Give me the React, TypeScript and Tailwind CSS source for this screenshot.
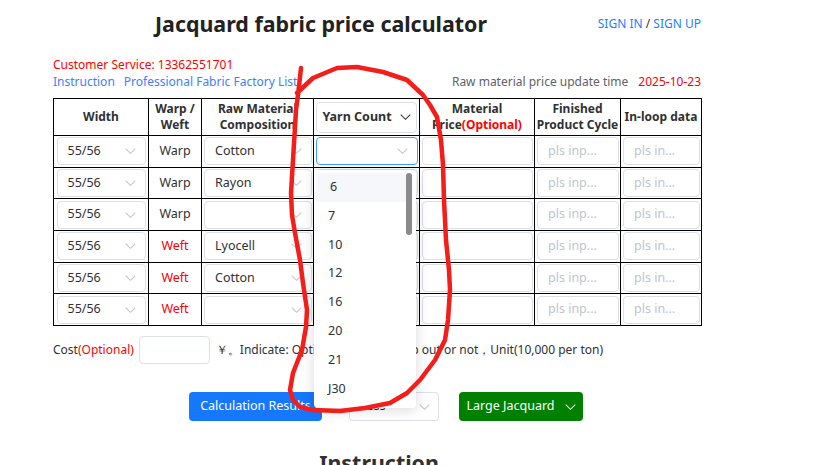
import React from "react";

const Chev = ({ color = "#c0c4cc", w = 11 }: { color?: string; w?: number }) => (
  <svg width={w} height={w * 0.55} viewBox="0 0 12 6.6" fill="none">
    <path d="M0.8 0.8 L6 5.8 L11.2 0.8" stroke={color} strokeWidth="1.1" />
  </svg>
);

const Sel = ({ text, w, focus }: { text?: string; w: string; focus?: boolean }) => (
  <div
    className={`${w} h-[28px] mx-auto flex items-center justify-between pl-[10px] pr-[9px] rounded-[4px] border bg-white ${
      focus ? "border-[#409eff]" : "border-[#dcdfe6]"
    }`}
  >
    <span className="text-[12.5px] text-[#303133]">{text}</span>
    <Chev />
  </div>
);

const Inp = ({ w, ph }: { w: string; ph?: string }) => (
  <div className={`${w} h-[28px] mx-auto flex items-center pl-[10px] rounded-[4px] border border-[#dcdfe6] bg-white`}>
    <span className="text-[12.5px] text-[#c0c4cc]">{ph}</span>
  </div>
);

const rows: { ww: string; raw: string }[] = [
  { ww: "Warp", raw: "Cotton" },
  { ww: "Warp", raw: "Rayon" },
  { ww: "Warp", raw: "" },
  { ww: "Weft", raw: "Lyocell" },
  { ww: "Weft", raw: "Cotton" },
  { ww: "Weft", raw: "" },
];

const items = ["6", "7", "10", "12", "16", "20", "21", "J30"];

export default function App() {
  return (
    <div
      className="relative w-[823px] h-[465px] overflow-hidden bg-white text-[#303133]"
      style={{ fontFamily: "'Noto Sans', 'Open Sans', sans-serif" }}
    >
      <div className="pl-[53px] w-[701px]">
        {/* header */}
        <div className="flex items-center h-[46px] pt-[2px]">
          <h1 className="ml-[102px] text-[21.4px] font-bold text-[#222]">Jacquard fabric price calculator</h1>
          <div className="ml-auto text-[12px] text-[#1e80ff] mt-[-1px]">
            SIGN IN <span className="text-[#303133]">/</span> SIGN UP
          </div>
        </div>
        <div className="mt-[10px] text-[12px] text-[#f00] leading-[17px]">Customer Service: 13362551701</div>
        <div className="flex items-center text-[12px] leading-[17px]">
          <span className="text-[#4080ff]">Instruction</span>
          <span className="text-[#4080ff] ml-[9px]">Professional Fabric Factory List</span>
          <span className="ml-auto text-[#606266]">Raw material price update time</span>
          <span className="ml-[10px] text-[#f00]">2025-10-23</span>
        </div>
        {/* table */}
        <table className="mt-[8px] border-collapse w-[648px] table-fixed">
          <thead>
            <tr className="h-[37px]">
              <th className="w-[95px] border border-black text-[12px] font-bold leading-[16px]">Width</th>
              <th className="w-[53px] border border-black text-[12px] font-bold leading-[16px]">
                Warp /<br />Weft
              </th>
              <th className="w-[112px] border border-black text-[12px] font-bold leading-[16px] whitespace-nowrap overflow-hidden">
                Raw Material<br />Composition
              </th>
              <th className="w-[106px] border border-black px-[2px]">
                <div className="h-[31px] flex items-center justify-center gap-[8px] rounded-[4px] border border-[#dcdfe6] text-[12.5px] font-bold">
                  Yarn Count <Chev color="#303133" w={11} />
                </div>
              </th>
              <th className="w-[115px] border border-black text-[12px] font-bold leading-[16px]">
                Material<br />Price<span className="text-[#f00]">(Optional)</span>
              </th>
              <th className="w-[86px] border border-black text-[12px] font-bold leading-[16px] whitespace-nowrap">
                Finished<br />Product Cycle
              </th>
              <th className="w-[81px] border border-black text-[12px] font-bold leading-[16px] whitespace-nowrap">In-loop data</th>
            </tr>
          </thead>
          <tbody>
            {rows.map((r, i) => (
              <tr key={i} className="h-[31.7px]">
                <td className="border border-black px-[2px]">
                  <Sel text="55/56" w="w-[89px]" />
                </td>
                <td className={`border border-black text-center text-[12.5px] ${r.ww === "Weft" ? "text-[#f00]" : ""}`}>
                  {r.ww}
                </td>
                <td className="border border-black px-[2px]">
                  <Sel text={r.raw} w="w-[108px]" />
                </td>
                <td className="border border-black px-[1px]">
                  <Sel w="w-[102px]" focus={i === 0} />
                </td>
                <td className="border border-black px-[2px]">
                  <Inp w="w-[111px]" />
                </td>
                <td className="border border-black px-[2px]">
                  <Inp w="w-[82px]" ph="pls inp..." />
                </td>
                <td className="border border-black px-[2px]">
                  <Inp w="w-[77px]" ph="pls in..." />
                </td>
              </tr>
            ))}
          </tbody>
        </table>
        {/* cost */}
        <div className="mt-[10px] flex items-center text-[12px] h-[28px]">
          <span>
            Cost<span className="text-[#f00]">(Optional)</span>
          </span>
          <div className="ml-[5px] w-[71px] h-[28px] rounded-[4px] border border-[#dcdfe6]" />
          <span className="ml-[6px] whitespace-nowrap">
            ￥。Indicate: Optional whether loop out or not，Unit(10,000 per ton)
          </span>
        </div>
        {/* buttons */}
        <div className="mt-[28px] flex items-center h-[29px]">
          <div className="ml-[136px] w-[133px] h-[29px] rounded-[4px] bg-[#1677ff] text-white text-[12.5px] flex items-center justify-center">
            Calculation Results
          </div>
          <div className="ml-[27px] w-[90px] h-[29px] rounded-[4px] border border-[#dcdfe6] flex items-center justify-between pl-[10px] pr-[8px] text-[12.5px]">
            <span>Less</span>
            <Chev />
          </div>
          <div className="ml-[20px] w-[124px] h-[29px] rounded-[4px] bg-[#008000] text-white text-[12.5px] flex items-center justify-center gap-[10px]">
            Large Jacquard <Chev color="#ffffff" w={11} />
          </div>
        </div>
        <h2 className="mt-[28px] text-[21.4px] font-bold text-center pl-[4px] leading-[28px]">Instruction</h2>
      </div>

      {/* dropdown */}
      <div className="absolute left-[314px] top-[170px] w-[102px] h-[238px] bg-white rounded-[4px] shadow-[0_2px_14px_rgba(0,0,0,0.15)] pt-[3px] overflow-hidden">
        {items.map((it, i) => (
          <div
            key={it}
            className={`h-[28.8px] flex items-center pl-[14px] text-[12.5px] text-[#303133] ${
              i === 0 ? "bg-[#f5f7fa] mr-[8px] ml-[2px] pl-[12px]" : ""
            }`}
          >
            {it}
          </div>
        ))}
        <div className="absolute left-[92px] top-[3px] w-[6px] h-[62px] rounded-full bg-[#8a8a8a]" />
      </div>

      {/* red annotation */}
      <svg className="absolute left-0 top-0 pointer-events-none" width="823" height="465">
        <path
          d="M301,68 L298,95 L296,110 L295,127 L293,160 L291,193 L292,215 L295,233 L300,260 L303,283 L307,310 L306,327 L302,350 L293,373 L290,390 L293,400 L300,407 L313,410 L340,411 L365,408 L390,403 L407,393 L420,380 L435,360 L445,340 L448,320 L450,290 L449,270 L446,240 L444,200 L443,165 L441,140 L437,117 L430,105 L423,95 L407,80 L383,72 L357,67 L337,68 L313,78 L297,93"
          fill="none"
          stroke="#f41d19"
          strokeWidth="4.5"
          strokeLinejoin="round"
          strokeLinecap="round"
        />
      </svg>
    </div>
  );
}
